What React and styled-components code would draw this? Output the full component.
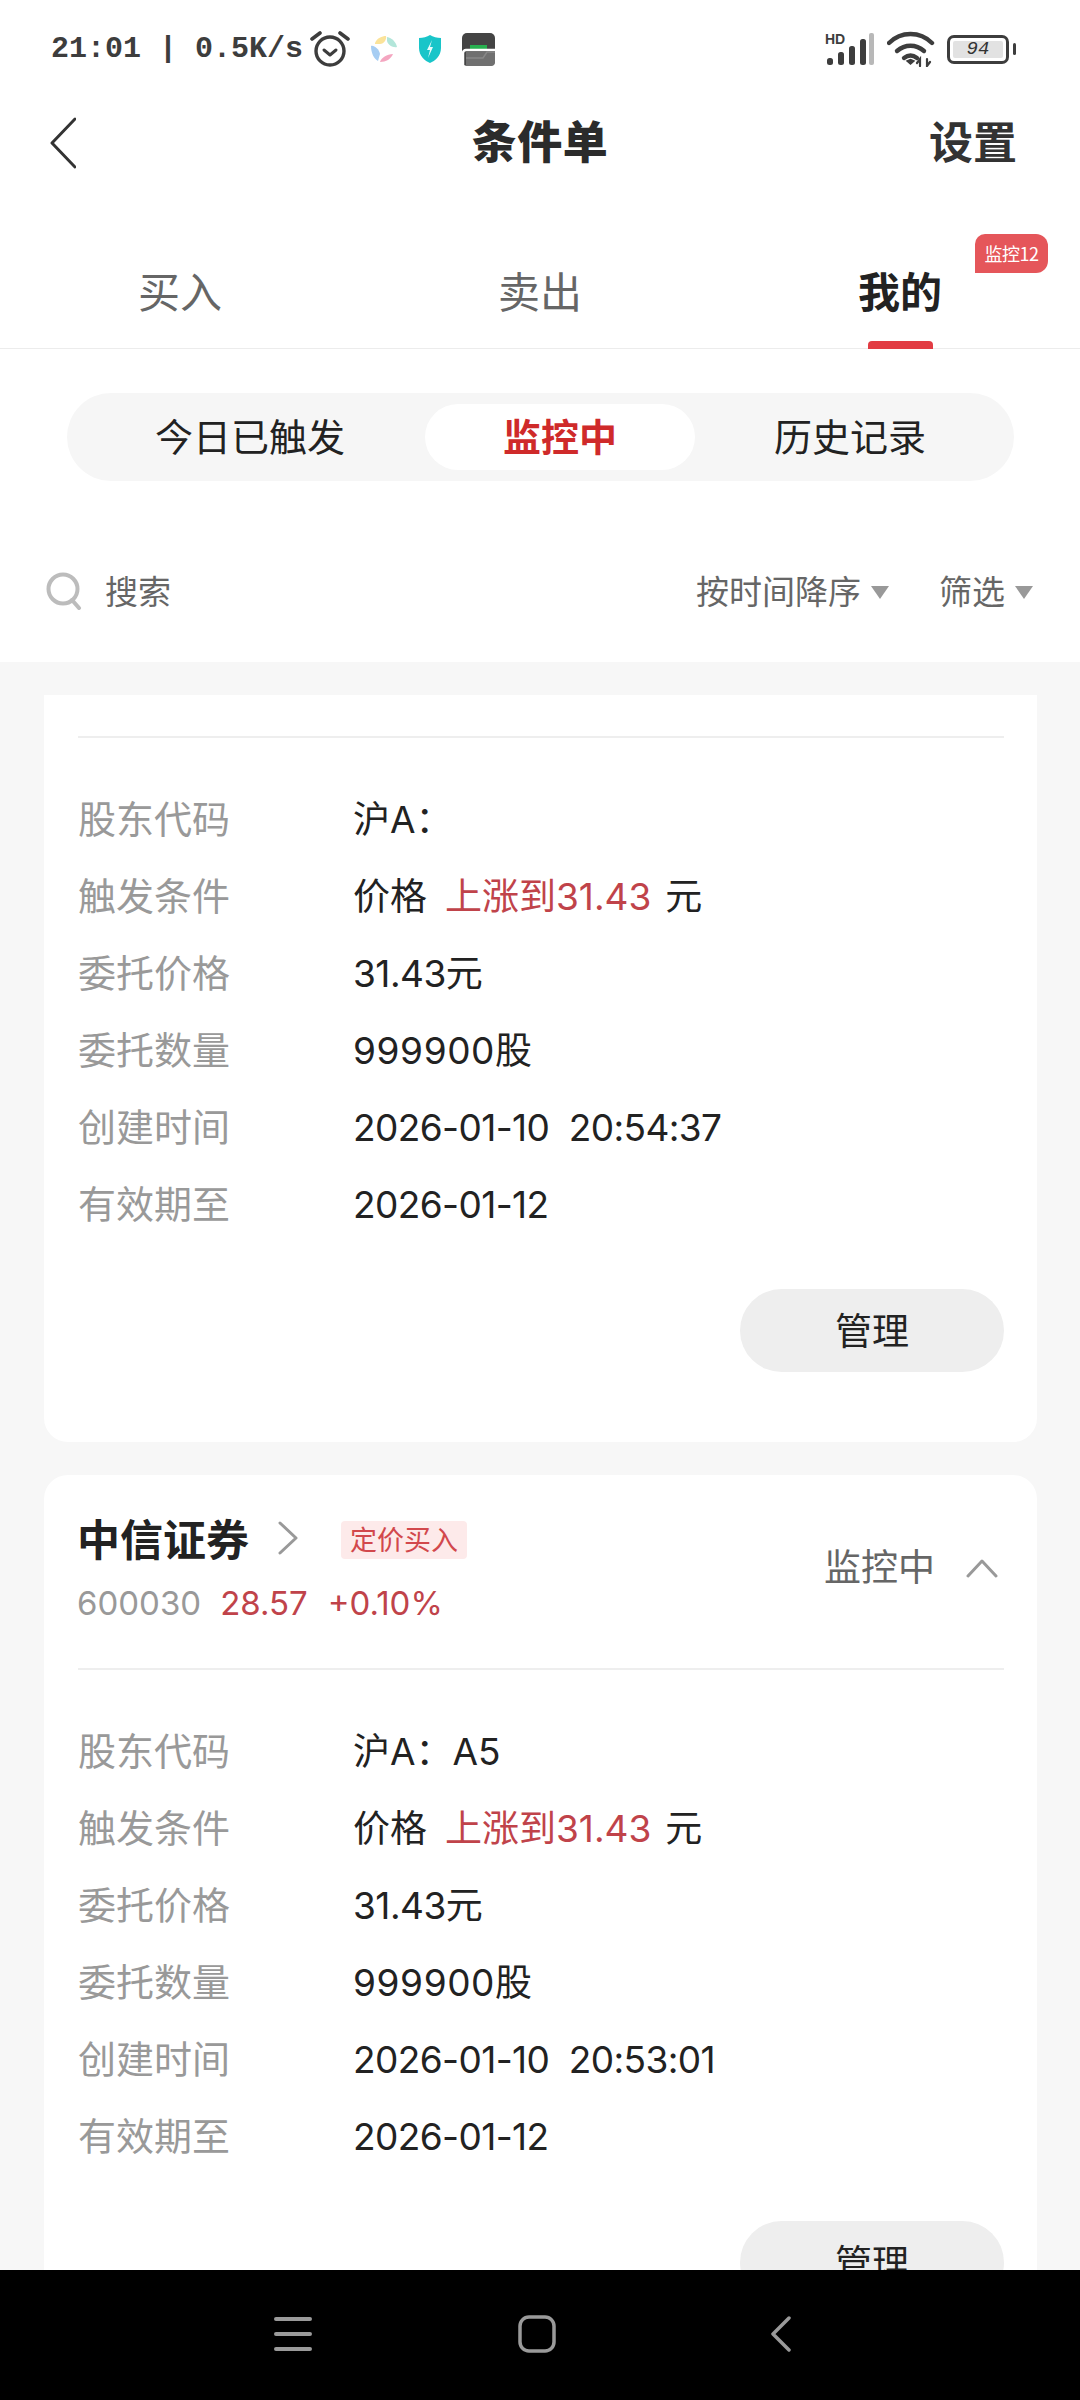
import React from "react";
import styled, { createGlobalStyle } from "styled-components";

const CJK = `"Noto Sans CJK SC", sans-serif`;
const MIXED = `Inter, "Noto Sans CJK SC", sans-serif`;

const Global = createGlobalStyle`
  html, body { margin: 0; padding: 0; background: #fff; }
  * { box-sizing: border-box; }
  body { font-family: ${MIXED}; }
`;

const Page = styled.div`
  width: 1080px;
  height: 2400px;
  display: flex;
  flex-direction: column;
  overflow: hidden;
  background: #fff;
`;

const StatusBar = styled.div`
  height: 98px;
  flex: none;
  display: flex;
  align-items: center;
  padding: 0 64px 0 51px;
  color: #3d3d3d;
  font: 700 30px "Liberation Mono", monospace;
`;
const Time = styled.span`
  white-space: pre;
  width: 259px;
`;
const StatusIcons = styled.div`
  display: flex;
  align-items: center;
  gap: 20px;
`;
const StatusRight = styled.div`
  margin-left: auto;
  display: flex;
  align-items: center;
  gap: 12px;
`;
const Cap = styled.i`
  display: block;
  width: 3px;
  height: 12px;
  background: #3d3d3d;
  border-radius: 2px;
  margin-left: -8px;
`;
const Battery = styled.div`
  width: 62px;
  height: 29px;
  border: 3px solid #3d3d3d;
  border-radius: 7px;
  padding: 3px;
  display: flex;
`;
const BatteryFill = styled.div`
  flex: 1;
  background: #e2e2e2;
  border-radius: 2px;
  display: flex;
  align-items: center;
  justify-content: center;
  font: italic 400 19px/1 "Liberation Mono", monospace;
  color: #333;
`;

const NavBar = styled.div`
  height: 84px;
  flex: none;
  display: grid;
  grid-template-columns: 1fr auto 1fr;
  align-items: center;
  padding: 0 50px;
`;
const BackSlot = styled.div`
  display: flex;
  padding-top: 5px;
`;
const Title = styled.div`
  font: 900 45px/1 ${CJK};
  color: #2b2b2b;
  letter-spacing: 0.5px;
  margin-top: -2px;
`;
const Action = styled.div`
  justify-self: end;
  margin-right: 13px;
  font: 700 44px/1 ${CJK};
  color: #333;
`;

const Tabs = styled.div`
  height: 167px;
  flex: none;
  display: grid;
  grid-template-columns: repeat(3, 1fr);
  border-bottom: 1px solid #ececec;
`;
const Tab = styled.div`
  position: relative;
  display: flex;
  justify-content: center;
  padding-top: 83px;
  font: ${(p) => (p.$active ? 700 : 400)} 42px/1.2 ${CJK};
  color: ${(p) => (p.$active ? "#222" : "#666")};
`;
const Underline = styled.i`
  position: absolute;
  left: 148px;
  bottom: -1px;
  width: 65px;
  height: 8px;
  border-radius: 4px 4px 0 0;
  background: #e23c43;
`;
const Badge = styled.span`
  position: absolute;
  left: 255px;
  top: 52px;
  width: 73px;
  height: 39px;
  background: #e5565a;
  border-radius: 10px 12px 12px 0;
  color: #fff;
  font: 400 18px/39px ${CJK};
  text-align: center;
  letter-spacing: -0.5px;
`;

const SegmentWrap = styled.div`
  flex: none;
  padding: 44px 66px 0 67px;
`;
const Segment = styled.div`
  height: 88px;
  border-radius: 44px;
  background: #f6f6f6;
  padding: 11px 0;
  display: grid;
  grid-template-columns: 358px 270px 1fr;
`;
const SegmentItem = styled.div`
  display: flex;
  align-items: center;
  justify-content: center;
  border-radius: 33px;
  background: ${(p) => (p.$active ? "#fff" : "transparent")};
  color: ${(p) => (p.$active ? "#cf2a2a" : "#222")};
  font: ${(p) => (p.$active ? 700 : 400)} 38px/1 ${CJK};
  padding: 0 ${(p) => p.$right || 0}px 5px ${(p) => p.$left || 0}px;
`;

const Toolbar = styled.div`
  flex: none;
  height: 181px;
  padding: 38px 47px 0 46px;
  display: flex;
  align-items: center;
  color: #666;
  font: 400 33px/1 ${CJK};
`;
const SearchText = styled.span`
  margin-left: 23px;
  margin-right: auto;
`;
const SortItem = styled.span`
  display: flex;
  align-items: center;
  gap: 10px;
  margin-left: ${(p) => p.$gap || 0}px;
`;
const Caret = styled.i`
  display: block;
  width: 0;
  height: 0;
  border-left: 9.5px solid transparent;
  border-right: 9.5px solid transparent;
  border-top: 13px solid #999;
  margin-top: 4px;
`;

const List = styled.div`
  flex: 1;
  min-height: 0;
  overflow: hidden;
  background: #f7f7f7;
  padding: 33px 43px 0 44px;
  display: flex;
  flex-direction: column;
  gap: 33px;
`;
const Card = styled.div`
  flex: none;
  background: #fff;
  border-radius: ${(p) => (p.$clipped ? "0 0 24px 24px" : "24px")};
  padding: 0 33px 70px 34px;
`;
const CardHead = styled.div`
  height: 193px;
  display: flex;
  justify-content: space-between;
  padding-top: 37px;
`;
const ClippedHead = styled.div`
  height: 41px;
`;
const NameRow = styled.div`
  display: flex;
  align-items: center;
  height: 52px;
`;
const Name = styled.span`
  font: 700 43px/1 ${CJK};
  color: #222;
  margin-left: -1px;
  padding-bottom: 2px;
`;
const Tag = styled.span`
  margin: 4px 0 0 43px;
  width: 126px;
  height: 38px;
  background: #fdeaea;
  border-radius: 4px;
  color: #d2484c;
  font: 400 27px/36px ${CJK};
  text-align: center;
`;
const QuoteRow = styled.div`
  display: flex;
  margin-top: 16px;
  margin-left: -1px;
  font: 400 33px/46px Inter, sans-serif;
  color: #999;
`;
const Quote = styled.span`
  color: #c0434a;
  margin-left: ${(p) => p.$gap}px;
`;
const StatusBox = styled.div`
  display: flex;
  align-items: center;
  gap: 31px;
  height: 106px;
  padding-right: 6px;
  font: 400 37px/1 ${CJK};
  color: #666;
`;
const Divider = styled.div`
  height: 2px;
  background: #eeeeee;
`;
const Rows = styled.div`
  padding-top: 43px;
`;
const Row = styled.div`
  height: 77px;
  display: grid;
  grid-template-columns: 275px 1fr;
  align-items: center;
`;
const RowLabel = styled.span`
  font: 400 38px/1 ${CJK};
  color: #999;
  padding-bottom: 5px;
`;
const RowValue = styled.span`
  font: 400 37px/1 ${MIXED};
  color: #222;
  white-space: pre;
  letter-spacing: ${(p) => p.$spacing || 0}px;
`;
const Red = styled.span`
  color: #c0434a;
  margin: 0 14px 0 18px;
`;
const Footer = styled.div`
  display: flex;
  justify-content: flex-end;
  margin-top: 46px;
`;
const ManageButton = styled.button`
  width: 264px;
  height: 83px;
  border: 0;
  border-radius: 42px;
  background: #eeeeee;
  color: #222;
  font: 400 37px/1 ${CJK};
  padding: 0 0 3px;
`;

const BottomNav = styled.div`
  height: 130px;
  flex: none;
  background: #000;
  display: grid;
  grid-template-columns: repeat(3, 244px);
  justify-content: center;
  align-items: center;
  justify-items: center;
  padding: 0 6px 2px 0;
`;

const Alarm = () => (
  <svg width="40" height="38" viewBox="0 0 40 38" fill="none" stroke="#3d3d3d">
    <circle cx="20" cy="21" r="14" strokeWidth="3.4" />
    <path d="M14 20l6 5 6-5" strokeWidth="3" strokeLinecap="round" strokeLinejoin="round" />
    <path d="M2 9l8-6M38 9l-8-6" strokeWidth="3.6" strokeLinecap="round" />
  </svg>
);
const Palette = () => (
  <svg width="28" height="28" viewBox="0 0 28 28">
    <path d="M5 8C7 3 12 1 16 1c1 3-2 8-6 8-2 0-4 0-5 0z" fill="#fbe39a" />
    <path d="M17 2c5 1 9 5 10 10-4 1-9-2-10-6z" fill="#b3e6da" />
    <path d="M1 11c3-1 8 3 9 8l-2 7c-4-2-7-8-7-15z" fill="#a6cdf3" />
    <path d="M10 27c1-4 7-8 13-8-2 5-7 8-13 8z" fill="#f4a6c0" />
  </svg>
);
const Shield = () => (
  <svg width="24" height="30" viewBox="0 0 24 30">
    <path d="M1 4c4 0 8-1 11-3 3 2 7 3 11 3v10c0 8-6 13-11 15C7 27 1 22 1 14z" fill="#19c5c9" />
    <path d="M14 6l-5 10h3l-2 8 5-11h-3z" fill="#e8fbfb" />
  </svg>
);
const CardApp = () => (
  <svg width="33" height="33" viewBox="0 0 33 33">
    <rect width="33" height="33" rx="5" fill="#444" />
    <rect x="8" y="12" width="17" height="6" fill="#27b04f" />
    <path d="M1 32V20a3 3 0 0 1 3-3h29" fill="none" stroke="#fff" strokeWidth="2.5" />
    <path d="M4 19h29v10a4 4 0 0 1-4 4H4z" fill="#707070" />
    <path d="M4 25h17l4-6h8" fill="none" stroke="#888" strokeWidth="1.5" />
  </svg>
);
const Signal = () => (
  <svg width="50" height="34" viewBox="0 0 50 34" fill="#3d3d3d">
    <text x="0" y="12" fontFamily="Liberation Sans, sans-serif" fontWeight="700" fontSize="14">HD</text>
    <rect x="2" y="26" width="6" height="7" rx="2.5" />
    <rect x="13" y="20" width="6" height="13" rx="2.5" />
    <rect x="24" y="14" width="6" height="19" rx="2.5" />
    <rect x="35" y="7" width="6" height="26" rx="2.5" />
    <rect x="44" y="1" width="5" height="32" rx="2" fill="#b8b8b8" />
  </svg>
);
const Wifi = () => (
  <svg width="48" height="36" viewBox="0 0 48 36" fill="none" stroke="#3d3d3d" strokeWidth="4.4" strokeLinecap="round">
    <path d="M2 12C14 0 33 0 45 12" />
    <path d="M10 20c8-7 19-7 27 0" />
    <path d="M17 27c4-3 9-3 13 0" />
    <path d="M20 30l3.500 3 3.500-3-3.500-1.500z" fill="#3d3d3d" strokeWidth="1.500" />
    <path d="M33 35v-7l-3 4M40 28v7l3-4" strokeWidth="2.200" />
  </svg>
);
const Back = () => (
  <svg width="26" height="52" viewBox="0 0 26 52" fill="none" stroke="#333" strokeWidth="3" strokeLinecap="round" strokeLinejoin="round">
    <path d="M25 2L2 26l23 24" />
  </svg>
);
const Search = () => (
  <svg width="36" height="38" viewBox="0 0 36 38" fill="none" stroke="#bcbcbc" strokeWidth="4">
    <circle cx="17" cy="17" r="14.500" />
    <path d="M26 28l7 8" strokeLinecap="round" />
  </svg>
);
const ChevronRight = () => (
  <svg width="20" height="34" viewBox="0 0 20 34" fill="none" stroke="#999" strokeWidth="3" strokeLinecap="round" strokeLinejoin="round" style={{ marginLeft: 29 }}>
    <path d="M2 2l16 15L2 32" />
  </svg>
);
const ChevronUp = () => (
  <svg width="32" height="19" viewBox="0 0 32 19" fill="none" stroke="#999" strokeWidth="3" strokeLinecap="round" strokeLinejoin="round" style={{ marginTop: 6 }}>
    <path d="M2 17L16 2l14 15" />
  </svg>
);
const NavMenu = () => (
  <svg width="38" height="36" viewBox="0 0 38 36" fill="none" stroke="#9a9a9a" strokeWidth="4" strokeLinecap="round">
    <path d="M2 3h34M2 18h34M2 33h34" />
  </svg>
);
const NavHome = () => (
  <svg width="38" height="38" viewBox="0 0 38 38" fill="none" stroke="#9a9a9a" strokeWidth="3.500">
    <rect x="2" y="2" width="34" height="34" rx="9" />
  </svg>
);
const NavBack = () => (
  <svg width="20" height="36" viewBox="0 0 20 36" fill="none" stroke="#9a9a9a" strokeWidth="3.500" strokeLinecap="round" strokeLinejoin="round">
    <path d="M18 2L2 18l16 16" />
  </svg>
);

const OrderRows = ({ account, created }) => (
  <>
    <Rows>
      <Row><RowLabel>股东代码</RowLabel><RowValue>{account}</RowValue></Row>
      <Row><RowLabel>触发条件</RowLabel><RowValue>价格<Red>上涨到31.43</Red>元</RowValue></Row>
      <Row><RowLabel>委托价格</RowLabel><RowValue $spacing={-0.5}>31.43元</RowValue></Row>
      <Row><RowLabel>委托数量</RowLabel><RowValue $spacing={0.6}>999900股</RowValue></Row>
      <Row><RowLabel>创建时间</RowLabel><RowValue $spacing={-0.6}>{created}</RowValue></Row>
      <Row><RowLabel>有效期至</RowLabel><RowValue $spacing={-0.6}>2026-01-12</RowValue></Row>
    </Rows>
    <Footer><ManageButton>管理</ManageButton></Footer>
  </>
);

export default function App() {
  return (
    <Page>
      <Global />
      <StatusBar>
        <Time>21:01 | 0.5K/s</Time>
        <StatusIcons>
          <Alarm />
          <Palette />
          <Shield />
          <CardApp />
        </StatusIcons>
        <StatusRight>
          <Signal />
          <Wifi />
          <Battery><BatteryFill>94</BatteryFill></Battery>
          <Cap />
        </StatusRight>
      </StatusBar>
      <NavBar>
        <BackSlot><Back /></BackSlot>
        <Title>条件单</Title>
        <Action>设置</Action>
      </NavBar>
      <Tabs>
        <Tab>买入</Tab>
        <Tab>卖出</Tab>
        <Tab $active>我的<Underline /><Badge>监控12</Badge></Tab>
      </Tabs>
      <SegmentWrap>
        <Segment>
          <SegmentItem $left={8}>今日已触发</SegmentItem>
          <SegmentItem $active>监控中</SegmentItem>
          <SegmentItem $right={9}>历史记录</SegmentItem>
        </Segment>
      </SegmentWrap>
      <Toolbar>
        <Search />
        <SearchText>搜索</SearchText>
        <SortItem>按时间降序<Caret /></SortItem>
        <SortItem $gap={50}>筛选<Caret /></SortItem>
      </Toolbar>
      <List>
        <Card $clipped>
          <ClippedHead />
          <Divider />
          <OrderRows account="沪A：" created="2026-01-10  20:54:37" />
        </Card>
        <Card>
          <CardHead>
            <div>
              <NameRow>
                <Name>中信证券</Name>
                <ChevronRight />
                <Tag>定价买入</Tag>
              </NameRow>
              <QuoteRow>
                600030
                <Quote $gap={19}>28.57</Quote>
                <Quote $gap={20}>+0.10%</Quote>
              </QuoteRow>
            </div>
            <StatusBox>监控中<ChevronUp /></StatusBox>
          </CardHead>
          <Divider />
          <OrderRows account="沪A：A5" created="2026-01-10  20:53:01" />
        </Card>
      </List>
      <BottomNav>
        <NavMenu />
        <NavHome />
        <NavBack />
      </BottomNav>
    </Page>
  );
}
